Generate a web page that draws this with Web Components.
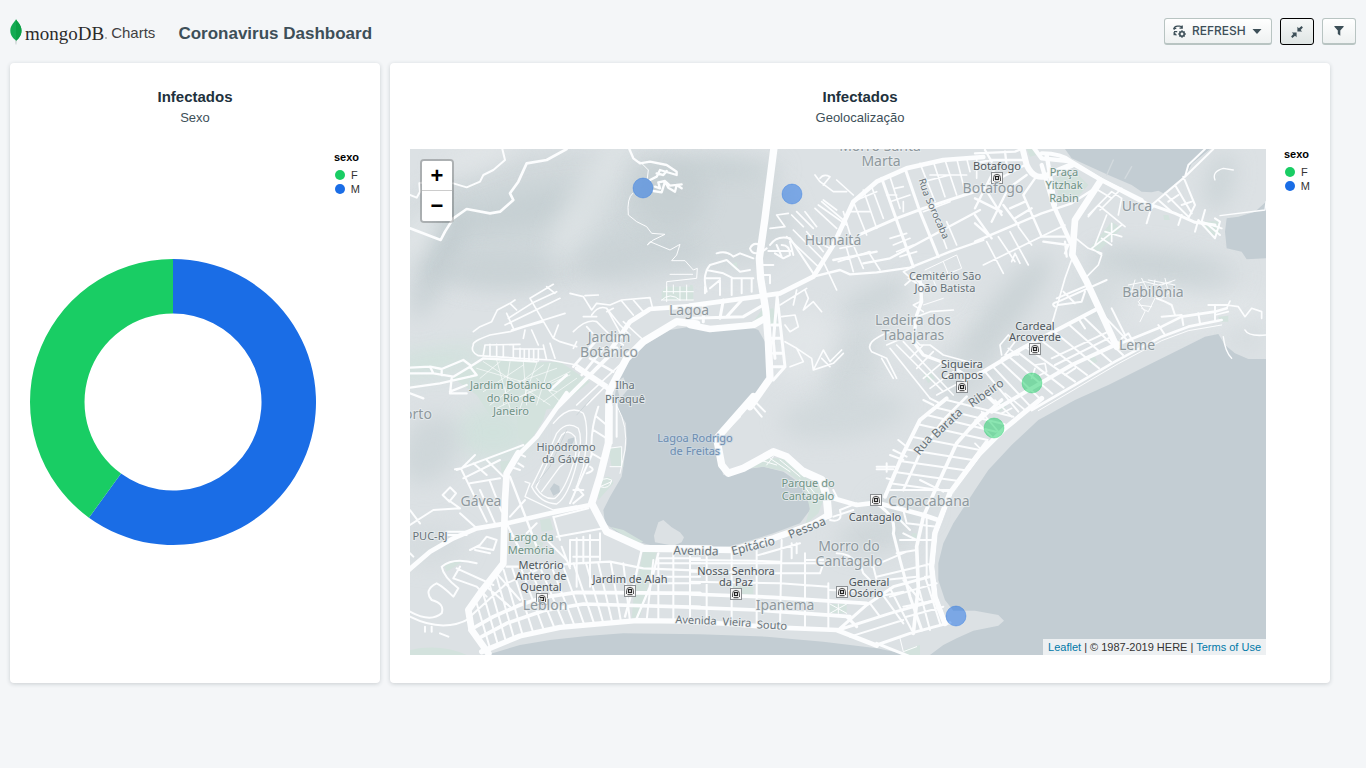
<!DOCTYPE html>
<html lang="pt">
<head>
<meta charset="utf-8">
<title>Coronavirus Dashboard</title>
<style>
  body { margin: 0; background: #f4f6f8; font-family: "Liberation Sans", Arial, sans-serif; color: #21313c; }
</style>
</head>
<body>
<dashboard-app></dashboard-app>

<template id="dashboard-app">
  <style>
    :host { display: block; min-height: 100vh; }
    main { display: grid; grid-template-columns: 37fr 94fr; gap: 10px; padding: 0 36px 20px 10px; }
  </style>
  <dashboard-header>Coronavirus Dashboard</dashboard-header>
  <main>
    <chart-card>
      <span slot="title">Infectados</span>
      <span slot="subtitle">Sexo</span>
      <donut-chart></donut-chart>
      <series-legend slot="legend" low>sexo</series-legend>
    </chart-card>
    <chart-card>
      <span slot="title">Infectados</span>
      <span slot="subtitle">Geolocalização</span>
      <geo-map></geo-map>
      <series-legend slot="legend">sexo</series-legend>
    </chart-card>
  </main>
</template>

<template id="dashboard-header">
  <style>
    :host { display: flex; align-items: center; height: 63px; padding: 0 10px; box-sizing: border-box; gap: 23px; }
    h1 { margin: 0; flex: 1; font-size: 17px; line-height: 24px; font-weight: bold; color: #3d4f58; padding-top: 4px; }
    nav { display: flex; gap: 8px; }
  </style>
  <brand-logo></brand-logo>
  <h1><slot></slot></h1>
  <nav>
    <tool-button label="Refresh">
      <svg width="13" height="13" viewBox="0 0 13 13" fill="none" stroke="#3d4f58" stroke-width="1.3">
        <path d="M1.200 4.800V3.600Q1.500 1.200 4.500 1.100h2.200q1.500 0 2 1.500M9.200.5v2.700H6.500M1 6.700h3.200M1.200 7v3.200M1.600 8.200c.4 1 1 1.600 1.900 2"/>
        <path d="M.3 3.400h3"/>
        <circle cx="9" cy="9" r="2.200" stroke-width="1.500"/>
        <path stroke-width="1.400" d="M9 5.300v1.400M9 11.300v1.500M5.300 9h1.400M11.300 9h1.500M6.400 6.400l1 1M10.600 10.600l1 1M11.600 6.400l-1 1M7.400 10.600l-1 1"/>
      </svg>
      <span>REFRESH</span>
      <svg width="10" height="5" viewBox="0 0 10 5"><path fill="#3d4f58" d="M.5 0h9L5 5z"/></svg>
    </tool-button>
    <tool-button label="Exit full screen" active>
      <svg width="12" height="12" viewBox="0 0 12 12"><path fill="#3d4f58" d="M6.400.8l1.500 1.400L10.600.1l1.300 1.300-2.300 2.500L11.200 5.600H6.400zM.8 6.400h4.800v4.800L4 9.700l-2.600 2.200L.1 10.600 2.300 8z"/></svg>
    </tool-button>
    <tool-button label="Filter">
      <svg width="10" height="10" viewBox="0 0 10 10"><path fill="#3d4f58" d="M.8 0h8.400q.8 0 .5.700L6.300 4.500V9.800L3.800 7.900V4.500L.4.700Q0 0 .8 0z"/></svg>
    </tool-button>
  </nav>
</template>

<template id="brand-logo">
  <style>
    :host { display: flex; align-items: center; color: #2b2b2b; }
    svg { display: block; margin-right: 3px; }
    .name { font: 19px/24px "Liberation Serif", "Times New Roman", serif; padding-top: 4px; }
    .dot { width: 2px; height: 2px; border-radius: 2px; background: #a5a8aa; margin: 13px 4px 0 1px; }
    .product { font-size: 15px; line-height: 24px; padding-top: 3px; color: #3f3f42; }
  </style>
  <svg width="12" height="26" viewBox="0 0 12 26">
    <path fill="#b8c4c2" d="M5.300 20h1.400l-.4 5.500h-.6z"/>
    <path fill="#13aa52" d="M6 .3C6.500 2 11.500 5.500 11.500 11.500c0 5.500-3.500 8.500-5.300 10.200C3.500 19.500.3 17 .3 11.500.3 6 5 3 6 .3z"/>
    <path fill="#0b9f45" d="M6 .3C6.500 2 11.500 5.500 11.500 11.500c0 5.500-3.500 8.500-5.300 10.200z"/>
  </svg>
  <span class="name">mongoDB</span><span class="dot"></span><span class="product">Charts</span>
</template>

<template id="tool-button">
  <style>
    :host { display: block; }
    button {
      display: flex; align-items: center; justify-content: center; gap: 6px;
      min-width: 34px; height: 27px; padding: 0 8px; box-sizing: border-box;
      border: 1px solid #b8c4c2; border-bottom-width: 2px; border-radius: 3px;
      background: linear-gradient(#ffffff, #eef1f1); color: #3d4f58;
      font: 500 12px/14px Inter, "Liberation Sans", sans-serif;
    }
    :host([label="Refresh"]) button { min-width: 108px; justify-content: flex-start; }
    :host([active]) button { border: 1px solid #000; background: linear-gradient(#f6f8f8, #dfe5e4); }
  </style>
  <button type="button"><slot></slot></button>
</template>

<template id="chart-card">
  <style>
    :host { display: flex; flex-direction: column; min-width: 0; box-sizing: border-box; padding: 24px 20px 28px; background: #fff; border-radius: 4px; box-shadow: 0 1px 4px rgba(33,49,60,.2); }
    h2, p { margin: 0; text-align: center; line-height: 20px; }
    h2 { font-size: 15px; color: #21313c; }
    p { font-size: 13px; color: #3d4f58; line-height: 22px; }
    .body { display: flex; gap: 18px; margin-top: 20px; }
    .plot { flex: 1; min-width: 0; }
  </style>
  <h2><slot name="title"></slot></h2>
  <p><slot name="subtitle"></slot></p>
  <div class="body"><div class="plot"><slot></slot></div><slot name="legend"></slot></div>
</template>

<template id="series-legend">
  <style>
    :host { display: block; width: 26px; font-size: 11px; color: #333; }
    :host([low]) { padding-top: 3px; }
    strong { display: block; line-height: 10px; color: #000; }
    ul { list-style: none; margin: 6px 0 0; padding: 0 0 0 1px; }
    li { display: flex; align-items: center; gap: 6px; height: 14px; }
    i { width: 10px; height: 10px; border-radius: 50%; background: #19cd64; }
    .m i { background: #1a6de6; }
  </style>
  <strong><slot></slot></strong>
  <ul><li><i></i>F</li><li class="m"><i></i>M</li></ul>
</template>

<template id="donut-chart">
  <style>
    :host { display: flex; align-items: center; height: 506px; }
    svg { display: block; width: 100%; height: auto; }
  </style>
  <svg viewBox="0 0 286 286" role="img" aria-label="Infectados por sexo">
    <path fill="#1a6de6" d="M143 0A143 143 0 1 1 58.950 258.690L91 214.600A88.500 88.500 0 1 0 143 54.500z"/>
    <path fill="#19cd64" d="M58.950 258.690A143 143 0 0 1 143 0V54.500A88.500 88.500 0 0 0 91 214.600z"/>
  </svg>
</template>

<template id="geo-map">
  <style>
    :host { display: block; position: relative; height: 506px; overflow: hidden; background: #dce1e4; }
    svg { display: block; width: 100%; height: 100%; }
    text { font-family: "Noto Sans", sans-serif; text-anchor: middle; paint-order: stroke; stroke: #e9edef; stroke-opacity: .8; stroke-width: 2px; stroke-linejoin: round; }
    .place { font-size: 14px; fill: #8f999e; }
    .spot, .road { font-size: 11px; fill: #687379; }
    .narrow { font-size: 10px; fill: #687379; }
    .station { font-size: 11px; fill: #4f575c; }
    .park { font-size: 11px; fill: #6f9385; }
    .lake { font-size: 11px; fill: #6d8db0; stroke: #c9d6e2; }
    .avenue { font-size: 12px; fill: #687379; }
    .zoom { position: absolute; left: 10px; top: 10px; display: grid; border: 2px solid rgba(0,0,0,.22); border-radius: 4px; background-clip: padding-box; }
    .zoom button { width: 30px; height: 30px; padding: 0; border: 0; background: #fff; color: #000; font: bold 22px/30px "Liberation Sans", Arial, sans-serif; }
    .zoom button:first-child { border-bottom: 1px solid #ccc; border-radius: 2px 2px 0 0; }
    .zoom button:last-child { border-radius: 0 0 2px 2px; }
    footer { position: absolute; right: 0; bottom: 0; padding: 0 5px; background: rgba(255,255,255,.7); color: #333; font-size: 11px; line-height: 16px; white-space: nowrap; }
    a { color: #0078a8; text-decoration: none; }
  </style>
  <svg viewBox="0 0 856 506" preserveAspectRatio="xMidYMid slice" role="img" aria-label="Mapa do Rio de Janeiro"></svg>
  <div class="zoom"><button type="button" aria-label="Zoom in">+</button><button type="button" aria-label="Zoom out">−</button></div>
  <footer><a href="#leaflet">Leaflet</a> | © 1987-2019 HERE | <a href="#terms">Terms of Use</a></footer>
</template>

<script>
const define = (name, setup) => customElements.define(name, class extends HTMLElement {
  constructor() {
    super();
    this.attachShadow({ mode: 'open' }).append(document.getElementById(name).content.cloneNode(true));
  }
  connectedCallback() { if (setup) setup(this); }
});

/* Map geometry uses three drawing units per map pixel, in six tiles. */
const tiles = { A: [0, -12], B: [840, -12], C: [1695, -12], D: [0, 753], E: [840, 753], F: [1695, 753] };

/* Point at fraction t of a polyline. */
const along = (line, t) => {
  const s = t * (line.length - 1), i = Math.min(Math.floor(s), line.length - 2), f = s - i;
  return [0, 1].map(k => Math.round(line[i][k] + (line[i + 1][k] - line[i][k]) * f));
};
/* Cross streets that join two avenues. */
const rungs = (a, b, n) => Array.from({ length: n }, (_, i) =>
  'M' + along(a, i / (n - 1)) + 'L' + along(b, i / (n - 1))).join('');

const hills = [
  // cx, cy, rx, ry, angle, colour, opacity
  [420, 210, 480, 200, -8, '#cdd5d8', .8], [900, 190, 260, 170, 10, '#cdd5d8', .7],
  [360, 180, 230, 50, -12, '#bfcacd', .55], [540, 150, 60, 220, 30, '#e0e5e7', .75],
  [90, 330, 45, 190, 24, '#bcc7cb', .6], [270, 370, 160, 50, 0, '#c3cdd0', .5],
  [200, 20, 120, 40, -20, '#e2e6e8', .8], [700, 330, 190, 70, -8, '#c4ced1', .55],
  [780, 130, 110, 110, 10, '#c1cbce', .5], [960, 60, 160, 30, 0, '#bfcacd', .6],
  [20, 260, 40, 110, 30, '#e6eaec', .8], [60, 640, 170, 36, -10, '#cfe2db', .9],
  [250, 850, 110, 80, 0, '#cfe2db', .8], [60, 900, 80, 110, 30, '#c6d0d3', .6],
  [60, 1190, 110, 60, 0, '#d2d9dc', .6], [1400, 450, 120, 40, -25, '#c3cdd0', .6],
  [1330, 640, 80, 130, 30, '#cad3d6', .6], [1180, 590, 90, 110, 30, '#e4e8ea', .7],
  [1300, 800, 190, 70, -8, '#cbd4d7', .6], [1540, 560, 150, 50, -20, '#e2e6e8', .7],
  [1800, 470, 50, 190, 38, '#c0cacd', .6], [1680, 650, 70, 120, 30, '#cad3d6', .6],
  [1560, 420, 70, 40, 0, '#e6eaec', .7], [1390, 1160, 110, 50, -10, '#c6cfd2', .6],
  [1470, 1080, 90, 50, 0, '#cdd6d8', .5], [2240, 350, 200, 50, 8, '#c3cdd0', .65],
  [2360, 480, 210, 50, -5, '#e4e8ea', .7], [2430, 100, 40, 90, 15, '#c6d0d3', .7],
  [2060, 430, 60, 100, 20, '#d0d8da', .6], [2400, 380, 90, 60, 0, '#ced6d9', .5],
  [2510, 570, 50, 24, 0, '#ced6d9', .6]
];

const water = [
  'M700,590L660,625 640,660 622,700 612,753 628,790 648,823 650,883 635,983 600,1043 580,1083 585,1123 620,1148 700,1183 730,1190 840,1195 960,1193 1090,1153 1170,1123 1200,1083 1195,1043 1170,1003 1120,968 1060,953 990,963 960,981 940,978 925,933 915,883 930,853 1020,758 1080,693 1080,628 1065,578 1045,543 1020,533 900,548 840,533 780,543Z',
  'M230,1518L330,1488 420,1473 530,1461 640,1453 870,1456 1070,1463 1240,1478 1400,1498 1500,1518Z',
  'M1560,1518L1600,1488 1640,1468 1690,1445 1765,1430 1782,1415 1765,1398 1695,1385 1630,1385 1605,1353 1585,1293 1585,1243 1600,1183 1630,1123 1695,1023 1735,963 1805,888 1885,813 1995,753 2095,708 2215,648 2295,608 2385,563 2425,555 2445,588 2475,613 2515,630 2568,630V1518Z',
  'M1965,0L1985,28 2095,78 2165,108 2195,128 2225,130 2245,125 2260,133 2330,75 2345,45 2400,0Z',
  'M2568,158L2535,188 2485,203 2450,208 2445,248 2450,298 2495,308 2510,331 2568,328Z',
  'M420,1020L432,1003 448,1012 450,1030 430,1040ZM430,680L475,715 465,722 440,705ZM475,870L495,865 490,880 475,900 465,895Z'
];

const parks = [
  ['A', 'M130,700L180,665 240,640 380,652 450,650 540,710 440,790 240,810 200,750ZM755,440L770,425H850V465H755Z'],
  ['B', 'M190,530L215,495 250,490 265,540ZM120,360L140,350 145,380ZM0,420H8V465H0ZM700,690L720,680 735,700 715,715Z'],
  ['C', 'M240,100L300,80 340,120 300,165 250,150ZM155,12H175L185,30 165,35ZM345,310L410,230 440,250 370,320ZM670,230L730,228 735,270 715,270ZM565,210H580L585,225H568ZM340,640L360,635 368,650 345,660ZM730,515L760,512V530H735Z'],
  ['D', 'M320,20L420,-10 400,60 350,140 325,110ZM390,360L420,355 430,390 395,395ZM700,450L742,450 690,650 665,655 670,600ZM595,145L635,140 640,200 605,200ZM565,250Q600,210 610,250L565,300ZM270,185L300,180 305,205 275,220ZM100,490L165,480 110,515ZM0,750Q90,730 170,765H0ZM600,380L640,390 700,425 680,430ZM340,400L400,430 385,470 345,440Z'],
  ['E', 'M150,208L200,185 240,175 290,175 350,235 390,250 400,300 385,340 345,375 360,325 340,255 290,215 220,200ZM120,560L190,556V583H150L120,600ZM420,612H470V640H420ZM640,750L690,735V765H650ZM665,400L680,400V415H665Z'],
  ['F', 'M60,20L85,5 95,20 75,35Z']
];

const roads = [
  // tile, width, path
  ['A', 6, 'M277,12L285,45 250,75 220,90 210,110 170,127 130,115M0,150L20,158 30,140 28,115 50,110'],
  ['A', 8, 'M470,12L410,45 350,55 325,110 300,145 310,165 270,200 240,205 170,192 130,220 105,260 92,285 0,250'],
  ['A', 7, 'M658,12L670,40 690,55 720,50 770,60 800,80 800,90 750,75 740,95 720,105M735,125L750,130 745,112 765,108 780,122 815,118M730,138L755,142 765,110 775,128 795,140 800,120 815,130M740,85L760,90 770,78'],
  ['A', 3, 'M690,50L715,75 712,100M668,145Q650,160 655,210L680,230 710,245 725,265 765,268 730,285 712,300 720,290 780,315 810,298 800,330 785,347 825,347 850,375 862,370 860,400 770,410V440M780,388H848'],
  ['A', 5, 'M190,560L210,545 245,530 262,495 300,475 315,465M360,460L430,418M295,520L365,475 440,440M285,540L450,460M305,555L465,505M410,425L435,445M300,475L320,495M360,460L430,580 450,590 500,605M290,505L310,550M345,555L340,580M365,555L385,600M430,580L445,540M190,600Q185,590 240,570L300,560 345,545 400,530M190,600Q180,620 205,632L330,640 420,645 500,660M220,630L225,600 330,598M240,598V635M260,598V637M280,600V637M310,600V640M330,610V642M343,612V644M357,614V646M371,616V647M385,616V648M310,612H400M400,600L410,645M420,595L435,640'],
  ['A', 5, 'M480,445L520,455 545,495 560,475 600,480M525,452L565,450M600,480L635,465 720,458 728,490M590,490L630,540 660,570M545,510Q565,480 590,490L645,590M635,468L670,510M670,465L700,500M590,500L610,490M490,560Q530,520 560,530L600,570 640,600M530,545L570,590M640,530L700,585M520,515H560M490,610L500,590'],
  ['A', 8, 'M490,665L560,585M515,690L580,610M540,640L610,680M500,660L590,720M470,690L420,735'],
  ['A', 12, 'M445,785L620,610M500,670L600,735'],
  ['A', 5, 'M500,780L640,650M530,780L590,720'],
  ['A', 7, 'M0,668L60,665 95,672 160,645 180,660M0,685L70,685 130,695 180,665 220,640 380,650M0,728L90,715 180,695 200,690M0,745L40,760M120,740L170,720M60,665L70,685M95,672V690M125,700L120,745H170M180,665L200,690'],
  ['A', 2, 'M200,670L440,740M220,650L420,780M260,645L300,790M300,650L280,780M340,650L350,780M380,655L330,790M420,655L380,780M440,670L300,720M480,690L320,760M240,780L400,660M220,740L340,660M210,700L270,650M400,770L500,700M380,700L450,770M260,790L480,680'],
  ['A', 22, 'M600,735L650,640 700,590 800,530 860,537'],
  ['A', 14, 'M605,610L660,530 720,492 860,482'],
  ['A', 3, 'M760,440H850M755,465H850M770,425V470M790,420V445M810,425V465M830,420V465M755,465Q780,440 810,465'],
  ['B', 22, 'M253,0L225,220 208,340 212,400 228,500 235,590 240,700 180,785'],
  ['B', 20, 'M0,540L60,552 190,540 225,520'],
  ['B', 14, 'M0,482L180,458 270,445 370,395 430,300 490,170 560,110 650,70 760,45 880,36'],
  ['B', 9, 'M0,520L160,515 220,480M100,465L90,520M40,475V530M160,460L110,515M262,450L250,590 255,640M262,460L285,665 250,705M245,540H268M245,580H270M250,625H278M250,665L285,665'],
  ['B', 6, 'M240,300Q260,270 300,280L370,385M230,310Q190,340 180,310 190,290 210,300M235,318H305M260,300L275,335M300,290L310,330M275,300Q300,300 300,330L280,340 255,325M80,325Q110,315 130,335L150,325 190,340M50,440Q35,390 60,360L110,345 150,380 180,375M50,375L100,385 130,400 190,400M45,400L90,400M60,430L90,405V450M125,400V450M155,400V445M185,400V440M45,445V425M210,390H240V415M210,360H250'],
  ['B', 5, 'M240,250L285,245 260,210 295,205M305,210L340,245M320,200L370,250M345,200L380,245M375,190L440,250M385,180L470,240M395,170L460,225M400,165L440,195M375,90L390,110 430,140 470,140M390,100Q400,85 420,95L400,120M440,105L490,150M310,255L400,345M290,275L390,370M380,290L420,310M350,260L400,320M400,350L440,435M270,480L350,430M320,435L310,480M345,435L355,460 340,495 370,470 395,500'],
  ['B', 5, 'M275,515L315,510 325,545 300,560 285,540M285,590L320,610 340,650 300,665M320,610L365,640 370,675 400,615 420,650 455,615M370,675L400,665 430,655 460,625M395,640L420,665'],
  ['B', 7, 'M370,395L450,375 480,388 560,382 660,368M660,368L780,320 880,285M430,345L560,320M520,355L600,340 740,265 870,195'],
  ['B', 9, 'M510,268L620,220 700,190 870,135M575,100L625,240 670,365M645,70L690,200 745,335'],
  ['B', 5, 'M460,200L490,300 520,370M490,170L530,270M520,135L560,250M535,320L570,375M470,310L490,380M480,200H540M500,165L560,140M545,125L580,220M600,95L630,190M690,55L735,170M730,50L765,155M765,45L800,150M800,40L825,140M830,40L840,80M860,35V100M600,170L660,150M615,130L640,125M590,150H620M640,170V200M445,350L540,320M600,280L650,265M610,300L660,280M620,320L670,300M630,335L680,320M450,310L500,300M700,110L780,90M720,90H830M770,230L800,300M730,200L770,310M700,200L780,170'],
  ['B', 5, 'M670,365L640,380 680,415 655,400M680,390L645,420M670,400L700,420 690,470 670,480 700,500M790,495L720,500 680,515 660,540M600,560Q520,590 545,620L590,640 620,700M575,640L610,700'],
  ['B', 10, 'M690,400L695,470 680,510 670,590 700,630 780,660 840,700'],
  ['B', 5, 'M590,600L660,570 690,600M600,610L720,760M620,600L760,740M640,590L790,750M660,640L700,600M680,670L730,620M700,700L760,650M720,730L790,680M740,750L870,680M690,600L720,600 760,630 870,660'],
  ['B', 3, 'M705,375L800,330 815,370 740,400M720,380L740,430M760,350L780,400M700,480L760,460'],
  ['C', 7, 'M0,25L120,20 140,12M0,55L50,45 150,45M30,15L50,50M90,20L95,60M0,75L50,60'],
  ['C', 18, 'M140,0L155,60Q180,115 230,85L290,60'],
  ['C', 13, 'M170,0L200,40 280,48 370,100 530,185'],
  ['C', 12, 'M200,25Q260,25 290,50L380,105 500,165'],
  ['C', 9, 'M530,180L600,205 660,232 720,240'],
  ['C', 20, 'M375,110L300,225 292,330 335,410 425,605'],
  ['C', 13, 'M200,60L235,180 290,300M215,30L240,180'],
  ['C', 7, 'M0,290L200,205 290,175 360,130M145,150L200,275 280,275M150,60L0,140M155,90L100,130 50,230M180,100L145,150M0,160L80,200M0,210L50,280M30,130L80,210M85,180L130,240M60,70L0,190M105,190L150,170M120,220L170,190M0,235L40,270M205,290L280,300 270,325M270,290L275,335'],
  ['C', 5, 'M25,360L270,240M35,290L85,385M70,275L120,350M105,260L160,360M130,245L170,300M110,350L120,325 135,355M295,330L270,400 230,540M290,270L340,310 380,325M350,310L440,240M340,210L410,140 440,160M360,130L410,160M340,215L370,180M370,180L450,245M375,195L440,130M410,235V290M390,260L440,275M380,280L410,300M440,160L430,210M395,210L360,300M350,310L380,330 370,360 330,400'],
  ['C', 6, 'M240,485Q225,475 250,470L395,405M250,480L320,470 330,440M245,460L340,420M265,440L300,475M410,490L450,570M370,500L420,590'],
  ['C', 6, 'M530,180L630,95 715,12M630,95L640,60 690,12M550,165L590,200M570,145L640,215M600,120L650,205M625,95L660,180 640,220M580,170L610,150M620,180L650,170M530,185L515,235M620,210L610,240M690,195L680,230M660,260L670,225 720,280 735,230 720,220M680,230L740,250M700,240L735,270'],
  ['C', 4, 'M735,212L870,195 873,170M720,105Q710,80 745,70L775,75M745,575Q750,620 770,640'],
  ['C', 4, 'M395,90L415,45M450,100L470,65', '#d3dade'],
  ['C', 12, 'M0,695L150,605 370,490M50,800L290,660 430,595'],
  ['C', 8, 'M425,600L560,545 620,515 720,500 755,490M170,795L420,650 560,575 640,545 740,525'],
  ['C', 3, 'M190,797L430,656 560,587 640,557 740,540'],
  ['C', 6, rungs([[30, 680], [150, 605], [365, 490]], [[130, 800], [300, 710], [480, 610]], 11) + 'M80,640L310,520 350,500M230,640L400,560M240,660L410,575M310,520L330,550M270,690L300,670M440,580L460,565 480,600M550,540L570,570M560,515L620,510 625,540M670,505L675,535M720,480V525M700,480H760'],
  ['C', 5, 'M80,630L75,600 100,570 120,590 90,630H130L100,610M180,660L210,655 215,680 195,690M170,700L180,670M720,510L760,500M755,490L765,468M755,480L790,485 810,515 830,490 860,500V520M810,555Q820,575 873,570'],
  ['C', 3, 'M460,420L510,410 550,420 590,410M480,405L470,440 500,450M500,400L520,440 490,470 510,500 495,530M540,405L530,450 560,460 600,430M570,400L580,440 610,450M540,460L520,500 500,490M600,405L560,420M450,450L490,455M520,405L600,420M490,480L530,485'],
  ['C', 6, 'M545,460L570,470 590,480 600,510'],
  ['D', 22, 'M597,-20L595,130 570,230 545,310 590,395 700,445 900,447'],
  ['D', 14, 'M-10,515L60,455 130,415 200,385 290,370 420,340 540,315'],
  ['D', 14, 'M470,-20L380,110 320,170'],
  ['D', 20, 'M325,160L290,220 285,300 280,490 210,580 175,630 185,690 235,760'],
  ['D', 16, 'M215,755L330,708 450,682 680,662 880,664'],
  ['D', 11, 'M180,690L250,650 330,615 400,592 500,577 870,580M215,710L290,670 400,632 520,612 870,622'],
  ['D', 7, 'M290,370L330,450M300,230L350,360 380,440M290,500L370,500 500,490 600,485 700,505 870,512M695,450L670,560 645,650M745,460L720,560 680,655'],
  ['D', 6, rungs([[200, 610], [275, 510], [370, 495], [500, 490], [640, 490]], [[240, 745], [330, 708], [450, 682], [560, 672], [660, 664]], 16) + 'M730,480L710,660M745,480V660M790,450V660M840,450V660M745,475H870M740,490H870M740,530H870M725,550H870M180,650L290,550 380,510M230,560L300,620M260,520L330,600'],
  ['D', 6, 'M140,210L340,135M135,208L155,205 195,165M155,210L230,365M160,235L270,180M230,180L280,230M180,250L270,235M210,270L255,370M240,245L275,335M190,190L230,225M0,375L70,330 150,325M0,330L30,370M300,350L345,300M98,285L120,262 138,280 118,305ZM115,300L150,325M110,395H180M110,405H170M150,340L200,385M325,190L340,200M300,200L330,210M325,160L345,170'],
  ['D', 4, 'M345,245L360,250 345,290 430,330 500,318M440,100Q470,60 505,85 520,120 500,190 475,290 440,312 390,310 365,260 420,150 440,100M455,105Q475,85 495,110 505,150 490,190 465,270 435,295 400,300 378,262 430,150 455,105M430,70Q480,10 520,40 540,80 520,200L490,290M395,275L450,200 490,170'],
  ['D', 2, 'M540,0L500,45M470,90L420,200 380,250', '#c6ced3'],
  ['D', 6, 'M560,50L590,75M550,90L590,115M545,160L580,180M565,20Q540,90 545,165L480,310M500,260L520,285 490,310M540,200Q560,210 530,220M490,270H520M605,20V130M620,0V110M430,350L450,420M440,410L580,385M435,350L535,325M455,440L480,505M480,420V500M500,415V560M520,410V490M540,405V560M570,400V480M480,420H570M490,470H570M400,410L470,480M350,400L380,370M300,420L345,410M310,450L340,460'],
  ['D', 3, 'M595,145L635,140V200H600M622,20Q655,80 645,150L630,220M565,260Q575,225 605,240 600,270 570,260L605,245'],
  ['D', 6, 'M-5,632Q60,670 95,640 105,610 65,600 40,570 80,550 100,560 130,590L145,565Q100,530 95,500 130,470 200,490M130,535L200,560 230,590M140,505L250,555M150,500L130,535M0,650Q100,700 180,655M45,695V680M65,695V680M90,700L115,710M180,450L210,435 230,410 260,420 250,450 200,440M195,450L240,460M0,460L10,470'],
  ['E', 22, 'M190,-10L80,115 95,195 115,220 160,205 250,155 290,170 345,220'],
  ['E', 24, 'M340,215L395,240 410,290 415,345'],
  ['E', 19, 'M415,345L370,372 250,415 130,450 0,448'],
  ['E', 14, 'M430,295L500,315 560,308 700,345 750,362'],
  ['E', 11, 'M0,582L250,592 530,610M0,622L200,630 480,650'],
  ['E', 14, 'M0,665L120,672 250,682 440,690 560,737'],
  ['E', 9, 'M560,730L660,770M445,690L530,615 610,560 720,530M445,690L600,640 740,600M560,735L660,700 780,668M470,650L500,680'],
  ['E', 12, 'M585,290L640,160 690,60 770,-5'],
  ['E', 17, 'M765,670L735,590 725,500 735,400 780,280 890,130'],
  ['E', 2.5, 'M775,670L745,590 735,500 745,400 790,280 900,135', '#dce1e4'],
  ['E', 11, 'M670,700L685,560 680,440 700,350 740,260 800,130 880,40'],
  ['E', 9, 'M565,315Q620,350 610,400L630,480 660,590 695,690'],
  ['E', 8, 'M640,270L690,160 760,60 830,-10'],
  ['E', 6, rungs([[600, 250], [640, 160], [690, 60], [770, 0]], [[785, 275], [840, 190], [900, 110], [970, 50]], 9) + 'M600,270H780M640,330L650,370 740,380M630,360L660,390M630,420L730,420M620,460L680,450M545,500L650,455M560,530L730,490M530,545L680,530M600,590L740,550M560,590L640,575M540,610L570,650M575,580L640,670M600,565L665,690M640,540L690,600M680,540L720,690M705,530L750,670M640,620L740,600M480,710L640,660M650,650L760,620M690,240L760,275M710,350V530M640,400L680,420'],
  ['E', 6, 'M50,450V675M125,455V665M200,440V670M275,420L270,680M345,460V690M415,550V690M0,480L200,482 270,485M0,490H395M0,515L270,520 390,520 400,490M0,545L270,550 415,560M200,467L330,430M305,430V475M320,430V460M345,480H400M420,570L530,575M420,360Q460,370 450,330L500,310M430,350L490,330M510,490L520,520 540,540M440,460Q480,460 500,490M550,500L560,540'],
  ['E', 6, 'M200,10L225,35M190,20L215,50M120,80L150,50M560,200H615M560,208H610M590,190V215M600,165L640,180M610,150L650,170M625,120L650,140M590,235L610,240M700,0L730,15M720,-5L750,10M430,270L440,290'],
  ['E', 3, 'M210,180L260,195M240,175L300,215M270,180L330,230M230,195L250,170M330,240L380,310M350,250L390,300M420,612L470,640M470,612L420,640M445,612V640M630,715L640,755 680,740'],
  ['F', 15, 'M-20,205L10,165 90,85 200,-5'],
  ['F', 11, 'M-15,85L80,0M60,10L30,-20'],
  ['F', 5, 'M0,60L50,110M20,35L70,95M60,0L110,50M90,-20L150,30M0,130L20,150M80,40L110,25']
];

const labels = [
  // kind, x, y (baseline), text, angle
  ['place', 470, 2, 'Morro Santa'], ['place', 471, 17, 'Marta'], ['place', 583, 44, 'Botafogo'],
  ['place', 727, 62, 'Urca'], ['place', 423, 96, 'Humaitá'], ['place', 279, 166, 'Lagoa'],
  ['place', 199, 193, 'Jardim'], ['place', 199, 208, 'Botânico'], ['place', 503, 176, 'Ladeira dos'],
  ['place', 503, 191, 'Tabajaras'], ['place', 743, 148, 'Babilônia'], ['place', 727, 201, 'Leme'],
  ['place', 71, 357, 'Gávea'], ['place', 519, 357, 'Copacabana'], ['place', 439, 402, 'Morro do'],
  ['place', 439, 417, 'Cantagalo'], ['place', 375, 461, 'Ipanema'], ['place', 135, 461, 'Leblon'],
  ['place', 8, 270, 'orto'],
  ['park', 654, 27, 'Praça'], ['park', 654, 40, 'Yitzhak'], ['park', 654, 53, 'Rabin'],
  ['park', 101, 240, 'Jardim Botânico'], ['park', 101, 253, 'do Rio de'], ['park', 101, 266, 'Janeiro'],
  ['park', 398, 338, 'Parque do'], ['park', 398, 351, 'Cantagalo'],
  ['park', 121, 392, 'Largo da'], ['park', 121, 405, 'Memória'],
  ['lake', 285, 293, 'Lagoa Rodrigo'], ['lake', 285, 306, 'de Freitas'],
  ['spot', 535, 131, 'Cemitério São'], ['spot', 535, 143, 'João Batista'],
  ['spot', 215, 240, 'Ilha'], ['spot', 215, 254, 'Piraquê'],
  ['spot', 156, 302, 'Hipódromo'], ['spot', 156, 314, 'da Gávea'], ['spot', 20, 391, 'PUC-RJ'],
  ['station', 587, 21, 'Botafogo'], ['station', 625, 181, 'Cardeal'], ['station', 625, 192, 'Arcoverde'],
  ['station', 552, 219, 'Siqueira'], ['station', 552, 230, 'Campos'], ['station', 465, 372, 'Cantagalo'],
  ['station', 459, 437, 'General'], ['station', 456, 448, 'Osório'],
  ['station', 326, 426, 'Nossa Senhora'], ['station', 326, 437, 'da Paz'], ['station', 220, 434, 'Jardim de Alah'],
  ['station', 131, 420, 'Metrório'], ['station', 131, 431, 'Antero de'], ['station', 131, 442, 'Quental'],
  ['avenue', 286, 406, 'Avenida', 1], ['avenue', 343, 401, 'Epitácio', -14], ['avenue', 397, 383, 'Pessoa', -22],
  ['road', 286, 475, 'Avenida', 2], ['road', 327, 477, 'Vieira', 3], ['road', 362, 480, 'Souto', 3],
  ['narrow', 515, 42, 'Rua', 72], ['narrow', 528, 73, 'Sorocaba', 66],
  ['avenue', 513, 300, 'Rua', -52], ['avenue', 537, 278, 'Barata', -44], ['avenue', 576, 248, 'Ribeiro', -35]
];

const stations = [[587, 29], [625, 200], [552, 238], [466, 351], [432, 443], [326, 445], [220, 442], [132, 450]];
const cases = [[233, 39, 'M'], [382, 45, 'M'], [546, 467, 'M'], [622, 234, 'F'], [584, 279, 'F']];

define('geo-map', host => {
  const at = t => `transform="translate(${tiles[t]})"`;
  host.shadowRoot.querySelector('svg').innerHTML = `
    <defs><filter id="soft" x="-100%" y="-100%" width="300%" height="300%"><feGaussianBlur stdDeviation="32"/></filter></defs>
    <g transform="scale(.33333)">
      <rect width="2568" height="1518" fill="#dce1e4"/>
      ${hills.map(([x, y, rx, ry, a, c, o]) => `<ellipse cx="${x}" cy="${y}" rx="${rx}" ry="${ry}" transform="rotate(${a} ${x} ${y})" fill="${c}" opacity="${o}" filter="url(#soft)"/>`).join('')}
      <g fill="#c3cdd3">${water.map(d => `<path d="${d}"/>`).join('')}</g>
      <path fill="#dce1e4" d="M735,1180L732,1160 745,1120 760,1113 785,1135 810,1150 822,1165 815,1180 790,1190ZM618,700L640,685 655,720 630,750Z"/>
      <g fill="#d3e2dd">${parks.map(([t, d]) => `<path ${at(t)} d="${d}"/>`).join('')}</g>
      <g fill="none" stroke-linejoin="round" stroke-linecap="round">
        ${roads.map(([t, w, d, c]) => `<path ${at(t)} stroke="${c || '#fcfdfe'}" stroke-width="${w}" d="${d}"/>`).join('')}
      </g>
    </g>
    ${stations.map(([x, y]) => `<g transform="translate(${x} ${y})"><rect x="-5.500" y="-5.500" width="11" height="11" fill="#f7f7f7" stroke="#8b8f92"/><path d="M-3.500 3V-.2a3.500 3.500 0 0 1 7 0V3" fill="none" stroke="#555"/><rect x="-1.500" y="-1.500" width="3" height="3" fill="none" stroke="#222" stroke-width="1.200"/><path d="M-2.500 3.700h5" stroke="#333"/></g>`).join('')}
    ${labels.map(([k, x, y, s, a]) => `<text class="${k}" x="${x}" y="${y}"${a ? ` transform="rotate(${a} ${x} ${y - 4})"` : ''}>${s}</text>`).join('')}
    ${cases.map(([x, y, s]) => { const c = s === 'M' ? '#1a6de6' : '#19cd64'; return `<circle cx="${x}" cy="${y}" r="10" fill="${c}" fill-opacity=".5" stroke="${c}" stroke-opacity=".35"/>`; }).join('')}`;
});
define('tool-button', host => host.shadowRoot.querySelector('button').setAttribute('aria-label', host.getAttribute('label')));
['brand-logo', 'series-legend', 'donut-chart', 'chart-card', 'dashboard-header', 'dashboard-app'].forEach(name => define(name));
</script>
</body>
</html>
